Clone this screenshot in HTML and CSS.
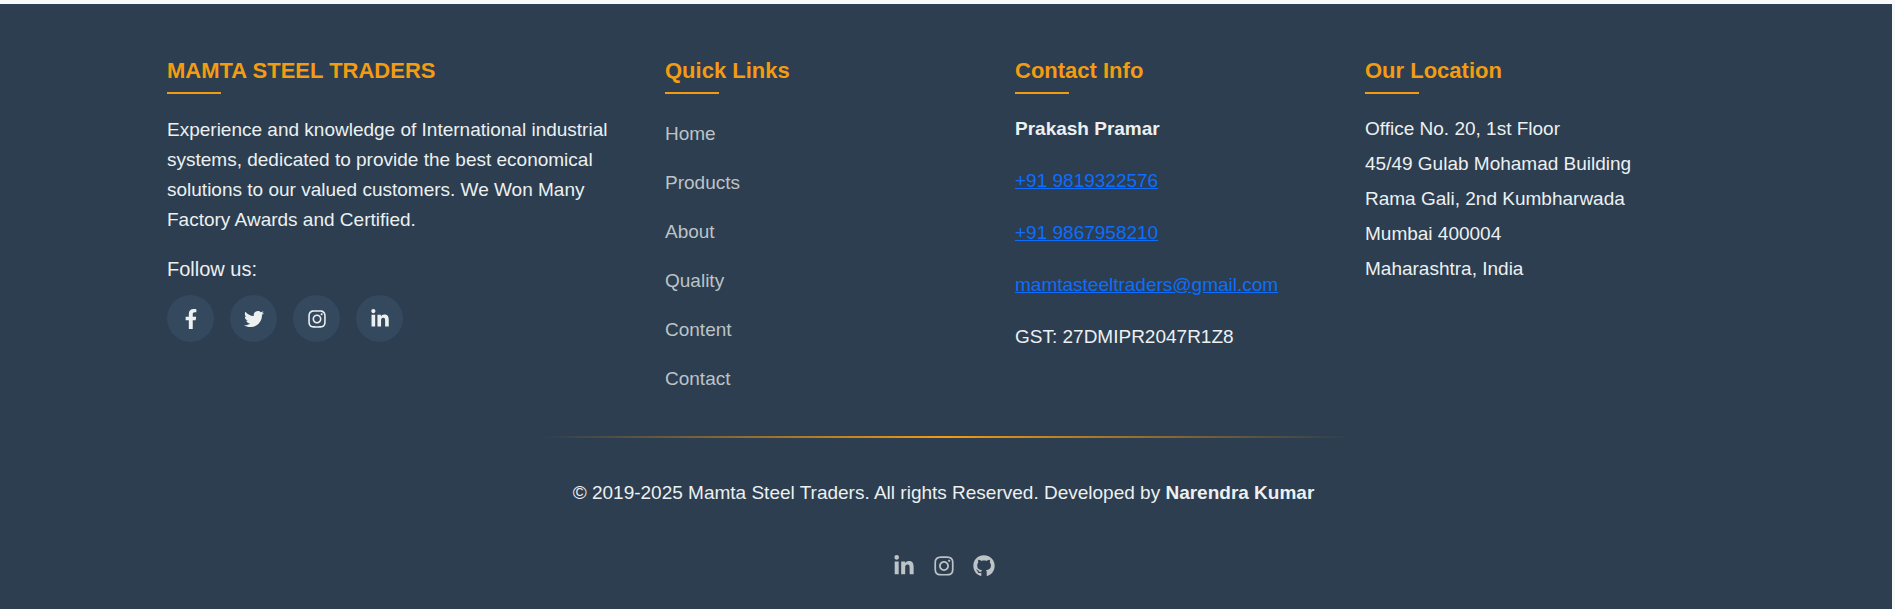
FILE: index.html
```html
<!DOCTYPE html>
<html lang="en">
<head>
<meta charset="utf-8">
<meta name="viewport" content="width=device-width, initial-scale=1">
<title>Mamta Steel Traders</title>
<link rel="stylesheet" href="styles.css">
</head>
<body>
<svg class="sprite" aria-hidden="true">
  <symbol id="facebook" viewBox="0 0 320 512"><path d="M279.14 288l14.22-92.66h-88.91v-60.13c0-25.35 12.42-50.06 52.24-50.06h40.42V6.26S260.43 0 225.36 0c-73.22 0-121.08 44.38-121.08 124.72v70.62H22.89V288h81.39v224h100.17V288z"/></symbol>
  <symbol id="twitter" viewBox="0 0 512 512"><path d="M459.37 151.716c.325 4.548.325 9.097.325 13.645 0 138.72-105.583 298.558-298.558 298.558-59.452 0-114.68-17.219-161.137-47.106 8.447.974 16.568 1.299 25.34 1.299 49.055 0 94.213-16.568 130.274-44.832-46.132-.975-84.792-31.188-98.112-72.772 6.498.974 12.995 1.624 19.818 1.624 9.421 0 18.843-1.3 27.614-3.573-48.081-9.747-84.143-51.98-84.143-102.985v-1.299c13.969 7.797 30.214 12.67 47.431 13.319-28.264-18.843-46.781-51.005-46.781-87.391 0-19.492 5.197-37.36 14.294-52.954 51.655 63.675 129.3 105.258 216.365 109.807-1.624-7.797-2.599-15.918-2.599-24.04 0-57.828 46.782-104.934 104.934-104.934 30.213 0 57.502 12.67 76.67 33.137 23.715-4.548 46.456-13.32 66.599-25.34-7.798 24.366-24.366 44.833-46.132 57.827 21.117-2.273 41.584-8.122 60.426-16.243-14.292 20.791-32.161 39.308-52.628 54.253z"/></symbol>
  <symbol id="instagram" viewBox="0 0 448 512"><path d="M224.1 141c-63.6 0-114.9 51.3-114.9 114.9s51.3 114.9 114.9 114.9S339 319.5 339 255.9 287.7 141 224.1 141zm0 189.6c-41.1 0-74.7-33.5-74.7-74.7s33.5-74.7 74.7-74.7 74.7 33.5 74.7 74.7-33.6 74.7-74.7 74.7zm146.4-194.3c0 14.9-12 26.8-26.8 26.8-14.9 0-26.8-12-26.8-26.8s12-26.8 26.8-26.8 26.8 12 26.8 26.8zm76.1 27.2c-1.7-35.9-9.9-67.7-36.2-93.9-26.2-26.2-58-34.4-93.9-36.2-37-2.1-147.9-2.1-184.9 0-35.8 1.7-67.6 9.9-93.9 36.1s-34.4 58-36.2 93.9c-2.1 37-2.1 147.9 0 184.9 1.7 35.9 9.9 67.7 36.2 93.9s58 34.4 93.9 36.2c37 2.1 147.9 2.1 184.9 0 35.9-1.7 67.7-9.9 93.9-36.2 26.2-26.2 34.4-58 36.2-93.9 2.1-37 2.1-147.8 0-184.8zM398.8 388c-7.8 19.6-22.9 34.7-42.6 42.6-29.5 11.7-99.5 9-132.1 9s-102.7 2.6-132.1-9c-19.6-7.8-34.7-22.9-42.6-42.6-11.7-29.5-9-99.5-9-132.1s-2.6-102.7 9-132.1c7.8-19.6 22.9-34.7 42.6-42.6 29.5-11.7 99.5-9 132.1-9s102.7-2.6 132.1 9c19.6 7.8 34.7 22.9 42.6 42.6 11.7 29.5 9 99.5 9 132.1s2.7 102.7-9 132.1z"/></symbol>
  <symbol id="linkedin" viewBox="0 0 448 512"><path d="M100.28 448H7.4V148.9h92.88zM53.79 108.1C24.09 108.1 0 83.5 0 53.8a53.79 53.79 0 0 1 107.58 0c0 29.7-24.1 54.3-53.79 54.3zM447.9 448h-92.68V302.4c0-34.7-.7-79.2-48.29-79.2-48.29 0-55.69 37.7-55.69 76.7V448h-92.78V148.9h89.08v40.8h1.3c12.4-23.5 42.69-48.3 87.88-48.3 94 0 111.28 61.9 111.28 142.3V448z"/></symbol>
  <symbol id="github" viewBox="0 0 496 512"><path d="M165.9 397.4c0 2-2.3 3.6-5.2 3.6-3.3.3-5.6-1.3-5.6-3.6 0-2 2.3-3.6 5.2-3.6 3-.3 5.6 1.3 5.6 3.6zm-31.1-4.5c-.7 2 1.3 4.3 4.3 4.9 2.6 1 5.6 0 6.2-2s-1.3-4.3-4.3-5.2c-2.6-.7-5.5.3-6.2 2.3zm44.2-1.7c-2.9.7-4.9 2.6-4.6 4.9.3 2 2.9 3.3 5.9 2.6 2.9-.7 4.9-2.6 4.6-4.6-.3-1.9-3-3.2-5.9-2.9zM244.8 8C106.1 8 0 113.3 0 252c0 110.9 69.8 205.8 169.5 239.2 12.8 2.3 17.3-5.6 17.3-12.1 0-6.2-.3-40.4-.3-61.4 0 0-70 15-84.7-29.8 0 0-11.4-29.1-27.8-36.6 0 0-22.9-15.7 1.6-15.4 0 0 24.9 2 38.6 25.8 21.9 38.6 58.6 27.5 72.9 20.9 2.3-16 8.8-27.1 16-33.7-55.9-6.2-112.3-14.3-112.3-110.5 0-27.5 7.6-41.3 23.6-58.9-2.6-6.5-11.1-33.3 2.6-67.9 20.9-6.5 69 27 69 27 20-5.6 41.5-8.5 62.8-8.5s42.8 2.9 62.8 8.5c0 0 48.1-33.6 69-27 13.7 34.7 5.2 61.4 2.6 67.9 16 17.7 25.8 31.5 25.8 58.9 0 96.5-58.9 104.2-114.8 110.5 9.2 7.9 17 22.9 17 46.4 0 33.7-.3 75.4-.3 83.6 0 6.5 4.6 14.4 17.3 12.1C428.2 457.8 496 362.9 496 252 496 113.3 383.5 8 244.8 8z"/></symbol>
</svg>
<footer class="footer">
  <div class="footer-grid">
    <section>
      <h2 class="title">MAMTA STEEL TRADERS</h2>
      <p class="about">Experience and knowledge of International industrial systems, dedicated to provide the best economical solutions to our valued customers. We Won Many Factory Awards and Certified.</p>
      <p class="follow">Follow us:</p>
      <div class="social">
        <a class="social-link" href="#" aria-label="Facebook"><svg class="icon"><use href="#facebook"/></svg></a>
        <a class="social-link" href="#" aria-label="Twitter"><svg class="icon"><use href="#twitter"/></svg></a>
        <a class="social-link" href="#" aria-label="Instagram"><svg class="icon"><use href="#instagram"/></svg></a>
        <a class="social-link" href="#" aria-label="LinkedIn"><svg class="icon"><use href="#linkedin"/></svg></a>
      </div>
    </section>
    <nav>
      <h2 class="title">Quick Links</h2>
      <ul class="links">
        <li><a href="#">Home</a></li>
        <li><a href="#">Products</a></li>
        <li><a href="#">About</a></li>
        <li><a href="#">Quality</a></li>
        <li><a href="#">Content</a></li>
        <li><a href="#">Contact</a></li>
      </ul>
    </nav>
    <section>
      <h2 class="title">Contact Info</h2>
      <div class="contact">
        <p><strong>Prakash Pramar</strong></p>
        <p><a href="tel:+919819322576">+91 9819322576</a></p>
        <p><a href="tel:+919867958210">+91 9867958210</a></p>
        <p><a href="mailto:mamtasteeltraders@gmail.com">mamtasteeltraders@gmail.com</a></p>
        <p>GST: 27DMIPR2047R1Z8</p>
      </div>
    </section>
    <section>
      <h2 class="title">Our Location</h2>
      <address class="address">Office No. 20, 1st Floor<br>45/49 Gulab Mohamad Building<br>Rama Gali, 2nd Kumbharwada<br>Mumbai 400004<br>Maharashtra, India</address>
    </section>
  </div>
  <div class="divider"></div>
  <div class="bottom">
    <p class="copyright">© 2019-2025 Mamta Steel Traders. All rights Reserved. Developed by <strong>Narendra Kumar</strong></p>
    <div class="dev-links">
      <a href="#" aria-label="LinkedIn"><svg class="icon"><use href="#linkedin"/></svg></a>
      <a href="#" aria-label="Instagram"><svg class="icon"><use href="#instagram"/></svg></a>
      <a href="#" aria-label="GitHub"><svg class="icon"><use href="#github"/></svg></a>
    </div>
  </div>
</footer>
</body>
</html>
```
FILE: styles.css
```css
* {
  box-sizing: border-box;
}

body {
  margin: 0;
  padding: 4px 3px 0 0;
  background: #f8f9fa;
  font-family: "Liberation Sans", Arial, sans-serif;
  font-size: 19px;
  line-height: 30px;
  color: #ecf0f1;
}

p,
h2,
ul {
  margin: 0;
  padding: 0;
}

.sprite {
  display: none;
}

.icon {
  display: block;
  width: 20px;
  height: 20px;
  fill: currentColor;
}

.footer {
  min-height: calc(100vh - 4px);
  padding: 49px 24px 20px;
  background: #2c3e50;
}

.footer-grid {
  display: grid;
  grid-template-columns: 3fr 2fr 2fr 2fr;
  gap: 54px;
  max-width: 1558px;
  margin: 0 auto;
  padding-right: 64px;
}

.title {
  margin-bottom: 17px;
  font-size: 22px;
  line-height: 36px;
  color: #f39c12;
}

.title::after {
  content: "";
  display: block;
  width: 54px;
  height: 2px;
  margin-top: 3px;
  background: #f39c12;
}

.about {
  padding-top: 4px;
}

.follow {
  margin-top: 19px;
  font-size: 20px;
}

.social {
  display: flex;
  gap: 16px;
  margin-top: 11px;
}

.social-link {
  display: flex;
  align-items: center;
  justify-content: center;
  width: 47px;
  height: 47px;
  border-radius: 50%;
  background: #34495e;
  color: #ecf0f1;
}

.links {
  display: grid;
  gap: 19px;
  padding-top: 8px;
  list-style: none;
}

.links a {
  color: #bdc3c7;
  text-decoration: none;
}

.contact {
  display: grid;
  gap: 22px;
  padding-top: 3px;
}

.contact a {
  color: #0d6efd;
}

.address {
  font-style: normal;
  line-height: 35px;
}

.divider {
  width: 44%;
  height: 2px;
  margin: 42px auto 0;
  background: linear-gradient(90deg, transparent, #f39c12, transparent);
}

.bottom {
  display: flex;
  flex-direction: column;
  align-items: center;
  gap: 47px;
  padding: 40px 5px 0 0;
}

.dev-links {
  display: flex;
  gap: 18px;
}

.dev-links a {
  color: #bdc3c7;
}

.dev-links .icon {
  width: 22px;
  height: 22px;
}
```
